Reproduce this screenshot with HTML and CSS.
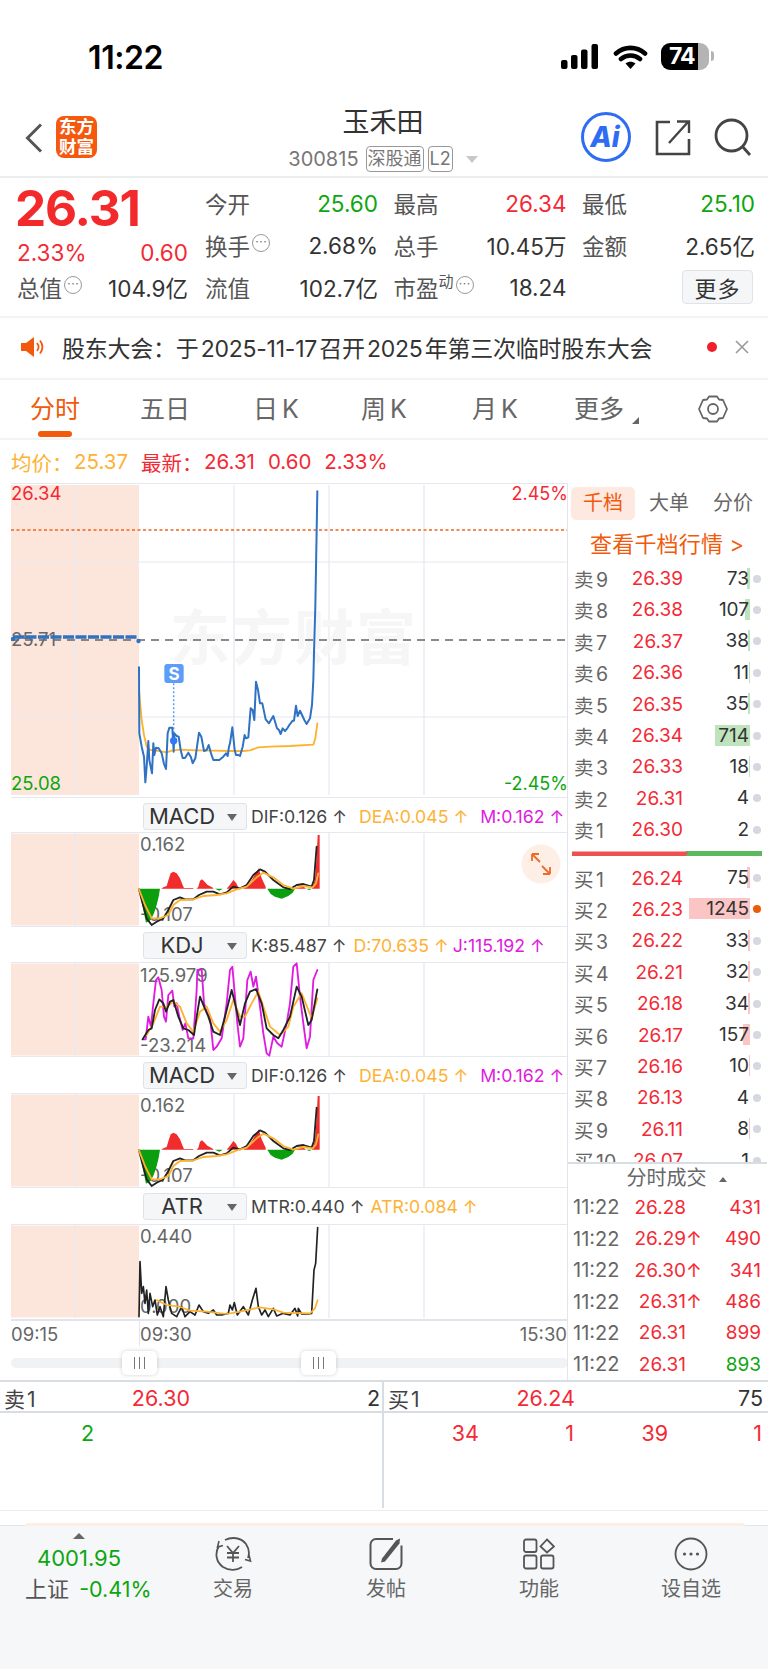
FILE: index.html
```html
<!DOCTYPE html>
<html lang="zh">
<head>
<meta charset="utf-8">
<title>玉禾田</title>
<link rel="stylesheet" href="styles.css">
</head>
<body>
<div class="page">
  <div class="status">
    <span class="clock">11:22</span>
    <div class="status-icons">
      <svg class="signal" width="38" height="25" viewBox="0 0 38 25"><rect x="0" y="16" width="6.5" height="9" rx="2"/><rect x="10" y="11" width="6.5" height="14" rx="2"/><rect x="20" y="5.5" width="6.5" height="19.5" rx="2"/><rect x="30.5" y="0" width="6.5" height="25" rx="2"/></svg>
      <svg class="wifi" width="35" height="25" viewBox="0 0 35 25"><path d="M3 9.5C11.5 2 23.5 2 32 9.5M8 15C13.5 10.300 21.500 10.300 27 15" fill="none" stroke="#000" stroke-width="4.6" stroke-linecap="round"/><path d="M12.500 19.500C15.500 17 19.500 17 22.500 19.500L17.500 25Z"/></svg>
      <div class="batt">74</div>
    </div>
  </div>

  <div class="nav">
    <svg class="back" width="18" height="30" viewBox="0 0 18 30"><path d="M16 1.500L2.500 15L16 28.500" fill="none" stroke="#555" stroke-width="3"/></svg>
    <div class="logo">东方<br>财富</div>
    <div class="nav-title">
      <div class="name">玉禾田</div>
      <div class="code"><span>300815</span><span class="tag">深股通</span><span class="tag">L2</span><i class="tri"></i></div>
    </div>
    <svg class="ai" width="52" height="52" viewBox="0 0 52 52"><circle cx="26" cy="26" r="23.500" fill="#fff" stroke="#2e6df2" stroke-width="3"/><text x="25" y="36" class="ai-text">Ai</text></svg>
    <svg class="share" width="36" height="37" viewBox="0 0 36 37"><path d="M15 3H2V35H34V20" fill="none" stroke="#444" stroke-width="2.600"/><path d="M14 24L33 3M22 2.500H34V14" fill="none" stroke="#444" stroke-width="2.400"/></svg>
    <svg class="search" width="38" height="38" viewBox="0 0 38 38"><circle cx="17.500" cy="17.500" r="15.500" fill="none" stroke="#444" stroke-width="2.800"/><path d="M28 28L36 37" stroke="#444" stroke-width="2.800"/></svg>
  </div>

  <div class="quote">
    <div class="q-left">
      <div class="big">26.31</div>
      <div class="q-chg"><span>2.33%</span><span>0.60</span></div>
      <div class="q-row"><span class="lab">总值<i class="more-dot">⋯</i></span><span class="val">104.9亿</span></div>
    </div>
    <div class="q-grid">
      <div class="q-row"><span class="lab">今开</span><span class="green">25.60</span></div>
      <div class="q-row"><span class="lab">最高</span><span class="red">26.34</span></div>
      <div class="q-row"><span class="lab">最低</span><span class="green">25.10</span></div>
      <div class="q-row"><span class="lab">换手<i class="more-dot">⋯</i></span><span class="val">2.68%</span></div>
      <div class="q-row"><span class="lab">总手</span><span class="val">10.45万</span></div>
      <div class="q-row"><span class="lab">金额</span><span class="val">2.65亿</span></div>
      <div class="q-row"><span class="lab">流值</span><span class="val">102.7亿</span></div>
      <div class="q-row"><span class="lab">市盈<sup>动</sup><i class="more-dot">⋯</i></span><span class="val">18.24</span></div>
      <div class="q-row q-end"><button class="morebtn">更多</button></div>
    </div>
  </div>

  <div class="notice">
    <svg width="24" height="24" viewBox="0 0 24 24"><path d="M1 8H6L14 2V22L6 16H1Z" fill="#f2590c"/><path d="M17 8C19 10.500 19 13.500 17 16M20 5.500C23 9.500 23 14.500 20 18.500" fill="none" stroke="#f2590c" stroke-width="1.800"/></svg>
    <span class="notice-text">股东大会：于 2025-11-17 召开 2025 年第三次临时股东大会</span>
    <i class="red-dot"></i>
    <svg class="close" width="16" height="16" viewBox="0 0 16 16"><path d="M2 2L14 14M14 2L2 14" stroke="#999" stroke-width="1.600"/></svg>
  </div>

  <div class="tabs">
    <span class="tab active">分时</span>
    <span class="tab t2">五日</span>
    <span class="tab t3">日 K</span>
    <span class="tab t4">周 K</span>
    <span class="tab t5">月 K</span>
    <span class="tab t6">更多<i class="corner"></i></span>
    <svg class="gear" width="30" height="30" viewBox="0 0 30 30"><path d="M11 2.500H19L21 5.500L25 6L29 15L25 24L21 24.500L19 27.500H11L9 24.500L5 24L1 15L5 6L9 5.500Z" fill="none" stroke="#666" stroke-width="1.800" stroke-linejoin="round"/><circle cx="15" cy="15" r="5" fill="none" stroke="#666" stroke-width="1.800"/></svg>
  </div>

  <div class="avgline">
    <span class="amber">均价：</span><span class="amber a2">25.37</span>
    <span class="red a3">最新：</span><span class="red a4">26.31</span><span class="red a5">0.60</span><span class="red a5">2.33%</span>
  </div>

  <div class="board">
    <div class="charts">
      <svg class="pane-main" width="568" height="316" viewBox="0 483 568 316">
        <rect x="11" y="485" width="128" height="310" fill="#fce6db"/>
        <g class="grid">
          <path d="M11 483.500H568M11 562H568M11 717H568M11 797.500H568M75 485V795M234 485V795M329 485V795M424 485V795"/>
        </g>
        <text x="170" y="660" class="wm">东方财富</text>
        <path d="M11 530H568" stroke="#f0651f" stroke-width="1.600" stroke-dasharray="3 2.500" fill="none"/>
        <path d="M11 640H568" stroke="#666" stroke-width="1.600" stroke-dasharray="8 6" fill="none"/>
        <text x="11" y="646" class="ax gray">25.71</text>
        <path d="M13 637H137" stroke="#2f72c4" stroke-width="3.500" stroke-dasharray="11 1.500" fill="none"/>
        <circle cx="13" cy="639" r="2.200" fill="#2f72c4"/><circle cx="138.500" cy="641" r="2.200" fill="#2f72c4"/>
        <text x="11" y="500" class="ax red-f">26.34</text>
        <text x="11" y="790" class="ax green-f">25.08</text>
        <text x="568" y="500" class="ax ax-pct red-f end">2.45%</text>
        <text x="568" y="790" class="ax ax-pct green-f end">-2.45%</text>
        <g transform="translate(130,640) scale(.33333)">
          <polyline class="l" stroke="#fdb22e" stroke-width="5.500" points="27,150 35,240 42,285 50,320 60,330 80,332 110,337 125,332 150,329 200,331 250,332 300,333 340,333 360,331 385,322 420,320 480,318 550,314 556,295 562,250"/>
          <path d="M131 130V320" stroke="#5b9df8" stroke-width="4.500" stroke-dasharray="6 6" fill="none"/>
          <polyline class="l" stroke="#2f72c4" stroke-width="6" points="27,82 28,280 35,320 42,350 46,427 50,380 55,303 58,360 66,400 70,310 73,345 78,323 86,325 95,340 102,372 108,387 113,280 118,263 127,263 131,335 133,280 140,288 146,290 152,330 158,354 165,354 175,338 183,352 188,370 196,355 207,278 214,290 222,333 230,330 236,315 243,340 250,360 268,360 278,352 288,340 293,348 297,320 300,310 307,262 314,330 318,345 325,345 330,348 338,320 344,285 348,295 355,292 362,205 368,210 373,240 378,125 384,150 390,190 397,190 407,238 417,250 430,228 441,265 447,270 452,282 458,265 465,273 472,265 478,255 488,242 492,242 498,197 503,228 510,212 516,225 523,240 530,252 540,235 546,195 550,120 553,0 556,-100 560,-330 562,-446"/>
          <circle cx="131" cy="302" r="11" fill="#2f7bf5"/>
          <rect x="103" y="72" width="58" height="57" rx="9" fill="#5b9df8"/>
        </g>
        <text x="174" y="680" class="s-badge">S</text>
      </svg>

      <div class="ind">
        <div class="sel">MACD<i class="sel-tri"></i></div>
        <span class="v">DIF:0.126 ↑</span><span class="v amber">DEA:0.045 ↑</span><span class="v mag">M:0.162 ↑</span>
      </div>
      <svg class="pane" width="568" height="95" viewBox="0 832 568 95">
        <g id="macdpane">
          <rect x="11" y="833.500" width="128" height="92" fill="#fce6db"/>
          <path class="grid-p" d="M11 832.500H568M11 926.500H568M75 833V926M234 833V926M329 833V926M424 833V926"/>
          <text x="140" y="851" class="ax gray">0.162</text>
          <text x="140" y="921" class="ax gray">-0.107</text>
          <g transform="translate(0,790) scale(.33333)">
            <path fill="#0b9e0f" d="M417 296H480L476 320L470 345L462 370L452 390L438 398L430 360L424 330ZM645 296H668L658 302ZM802 296H885L878 308L865 318L845 326L825 320L812 312ZM918 296H936L928 300Z"/>
            <path fill="#f22c2c" d="M484 296L490 292L500 288L506 268L512 250L520 245L530 250L540 265L548 285L552 294L580 294V296ZM590 296L595 290L600 272L606 268L614 275L622 284L640 294V296ZM680 296L690 284L700 270L708 278L714 290L718 296ZM730 296L745 285L757 268L768 248L776 235L785 265L797 290V296ZM885 296L905 285L918 296ZM936 296L945 270L950 200L953 135H959V296Z"/>
            <polyline class="l" stroke="#222" stroke-width="5.500" points="417,298 425,330 440,385 455,405 470,395 490,385 505,360 520,330 540,322 555,328 580,328 597,315 620,305 640,305 660,313 680,307 700,290 720,295 740,285 760,255 780,238 795,245 820,270 850,292 870,297 890,285 910,282 935,290 942,270 950,170"/>
            <polyline class="l" stroke="#fdb22e" stroke-width="5.500" points="417,298 435,345 455,385 480,385 505,375 520,345 540,330 580,328 610,318 650,315 680,310 710,298 740,290 770,262 790,248 820,262 850,285 880,296 910,288 938,292 948,280 955,250"/>
          </g>
        </g>
        <circle cx="541" cy="864" r="19.500" fill="#fdeee6"/>
        <path d="M532 854V861M532 854H539M532 854L540 862M550 874V867M550 874H543M550 874L542 866" stroke="#ef6a28" stroke-width="1.800" fill="none"/>
      </svg>

      <div class="ind i2">
        <div class="sel">KDJ<i class="sel-tri"></i></div>
        <span class="v">K:85.487 ↑</span><span class="v amber">D:70.635 ↑</span><span class="v mag tight">J:115.192 ↑</span>
      </div>
      <svg class="pane" width="568" height="95" viewBox="0 962 568 95">
        <rect x="11" y="963.500" width="128" height="92" fill="#fce6db"/>
        <path class="grid-p" d="M11 962.500H568M11 1056.500H568M75 963V1056M234 963V1056M329 963V1056M424 963V1056"/>
        <text x="140" y="982" class="ax gray">125.979</text>
        <text x="140" y="1052" class="ax gray">-23.214</text>
        <g transform="translate(0,790) scale(.33333)">
          <polyline class="l" stroke="#e01ae0" stroke-width="5.500" points="428,748 437,748 445,680 453,710 460,640 468,570 475,562 485,600 492,680 498,695 505,615 517,602 523,650 530,640 538,680 548,720 556,700 565,745 580,745 590,600 592,540 605,538 612,640 622,670 630,680 640,780 650,770 665,745 680,640 690,540 697,530 705,620 712,700 720,770 730,745 742,570 752,545 760,590 768,560 780,650 790,730 800,790 808,797 820,740 832,760 845,770 860,700 870,640 880,530 890,520 900,620 910,700 920,775 930,740 940,570 952,540"/>
          <polyline class="l" stroke="#fdb22e" stroke-width="5.500" points="440,735 460,700 480,650 500,650 520,635 540,650 560,700 580,725 600,665 620,650 640,700 660,725 680,690 700,630 720,680 735,680 755,640 775,605 790,650 810,710 840,735 865,710 880,650 905,610 925,660 935,685 952,625"/>
          <polyline class="l" stroke="#222" stroke-width="5.500" points="428,748 445,720 455,715 465,660 478,628 490,640 498,665 510,635 520,630 535,680 550,715 565,720 582,735 590,680 600,620 612,650 625,680 640,725 660,735 675,680 695,600 705,640 720,705 735,640 750,605 768,597 785,640 800,715 820,735 835,745 850,720 870,680 890,590 905,620 925,705 935,690 952,598"/>
        </g>
      </svg>

      <div class="ind i3">
        <div class="sel">MACD<i class="sel-tri"></i></div>
        <span class="v">DIF:0.126 ↑</span><span class="v amber">DEA:0.045 ↑</span><span class="v mag">M:0.162 ↑</span>
      </div>
      <svg class="pane" width="568" height="95" viewBox="0 832 568 95"><use href="#macdpane"/></svg>

      <div class="ind i3 i4">
        <div class="sel">ATR<i class="sel-tri"></i></div>
        <span class="v">MTR:0.440 ↑</span><span class="v amber">ATR:0.084 ↑</span>
      </div>
      <svg class="pane atr" width="568" height="97" viewBox="0 1224 568 97">
        <rect x="11" y="1225.500" width="128" height="92" fill="#fce6db"/>
        <path class="grid-p" d="M11 1224.500H568M75 1225V1318M234 1225V1318M329 1225V1318M424 1225V1318"/>
        <path d="M11 1320H568" stroke="#d8dbe2" stroke-width="1.500"/>
        <text x="140" y="1243" class="ax gray">0.440</text>
        <text x="140" y="1313" class="ax gray">0.000</text>
        <g transform="translate(0,1060) scale(.33333)">
          <polyline class="l" stroke="#222" stroke-width="5" points="417,770 420,605 425,700 430,680 435,730 440,690 445,760 450,700 458,740 465,720 472,765 480,740 490,770 498,680 505,720 515,760 530,770 545,740 555,770 570,755 585,765 597,735 610,755 625,760 640,750 650,765 665,765 685,760 690,735 697,750 703,728 712,765 730,740 745,765 757,720 768,685 775,740 785,765 795,750 805,770 820,745 830,768 850,760 870,765 885,745 893,768 895,745 905,762 925,762 935,760 942,630 947,610 953,503"/>
          <polyline class="l" stroke="#fdb22e" stroke-width="5" points="470,720 500,735 540,740 570,752 620,755 680,762 720,755 780,742 820,748 850,758 930,760 945,745 953,720"/>
        </g>
      </svg>

      <div class="axis"><span>09:15</span><span class="a930">09:30</span><span class="a1530">15:30</span></div>
      <div class="slider">
        <div class="track">
          <div class="knob k1"><i></i><i></i><i></i></div>
          <div class="knob k2"><i></i><i></i><i></i></div>
        </div>
      </div>
    </div>

    <div class="side">
      <div class="side-tabs"><span class="st on">千档</span><span class="st">大单</span><span class="st">分价</span></div>
      <div class="side-link">查看千档行情 &gt;</div>
      <div class="book">
        <div class="row"><span class="rl">卖 9</span><span class="rp">26.39</span><span class="rv"><b class="bar g" style="width:3px"></b><em>73</em></span><i class="dot"></i></div>
        <div class="row"><span class="rl">卖 8</span><span class="rp">26.38</span><span class="rv"><b class="bar g" style="width:5px"></b><em>107</em></span><i class="dot"></i></div>
        <div class="row"><span class="rl">卖 7</span><span class="rp">26.37</span><span class="rv"><b class="bar g" style="width:2px"></b><em>38</em></span><i class="dot"></i></div>
        <div class="row"><span class="rl">卖 6</span><span class="rp">26.36</span><span class="rv"><b class="bar g" style="width:1px"></b><em>11</em></span><i class="dot"></i></div>
        <div class="row"><span class="rl">卖 5</span><span class="rp">26.35</span><span class="rv"><b class="bar g" style="width:2px"></b><em>35</em></span><i class="dot"></i></div>
        <div class="row"><span class="rl">卖 4</span><span class="rp">26.34</span><span class="rv"><b class="bar g" style="width:35px"></b><em>714</em></span><i class="dot"></i></div>
        <div class="row"><span class="rl">卖 3</span><span class="rp">26.33</span><span class="rv"><b class="bar g" style="width:1px"></b><em>18</em></span><i class="dot"></i></div>
        <div class="row"><span class="rl">卖 2</span><span class="rp">26.31</span><span class="rv"><em>4</em></span><i class="dot"></i></div>
        <div class="row"><span class="rl">卖 1</span><span class="rp">26.30</span><span class="rv"><em>2</em></span><i class="dot"></i></div>
        <div class="ratio"><i class="ratio-r"></i><i class="ratio-g"></i></div>
        <div class="row first"><span class="rl">买 1</span><span class="rp">26.24</span><span class="rv"><b class="bar r" style="width:3px"></b><em>75</em></span><i class="dot"></i></div>
        <div class="row"><span class="rl">买 2</span><span class="rp">26.23</span><span class="rv"><b class="bar r" style="width:61px"></b><em>1245</em></span><i class="dot hot"></i></div>
        <div class="row"><span class="rl">买 3</span><span class="rp">26.22</span><span class="rv"><b class="bar r" style="width:2px"></b><em>33</em></span><i class="dot"></i></div>
        <div class="row"><span class="rl">买 4</span><span class="rp">26.21</span><span class="rv"><b class="bar r" style="width:2px"></b><em>32</em></span><i class="dot"></i></div>
        <div class="row"><span class="rl">买 5</span><span class="rp">26.18</span><span class="rv"><b class="bar r" style="width:2px"></b><em>34</em></span><i class="dot"></i></div>
        <div class="row"><span class="rl">买 6</span><span class="rp">26.17</span><span class="rv"><b class="bar r" style="width:7px"></b><em>157</em></span><i class="dot"></i></div>
        <div class="row"><span class="rl">买 7</span><span class="rp">26.16</span><span class="rv"><b class="bar r" style="width:1px"></b><em>10</em></span><i class="dot"></i></div>
        <div class="row"><span class="rl">买 8</span><span class="rp">26.13</span><span class="rv"><em>4</em></span><i class="dot"></i></div>
        <div class="row"><span class="rl">买 9</span><span class="rp">26.11</span><span class="rv"><b class="bar r" style="width:1px"></b><em>8</em></span><i class="dot"></i></div>
        <div class="row"><span class="rl">买 10</span><span class="rp">26.07</span><span class="rv"><em>1</em></span><i class="dot"></i></div>
      </div>
      <div class="trades">
        <div class="tr-head">分时成交<i class="up-tri"></i></div>
        <div class="tr"><span class="tt">11:22</span><span class="tp">26.28</span><span class="ta"></span><span class="tv red">431</span></div>
        <div class="tr"><span class="tt">11:22</span><span class="tp">26.29</span><span class="ta">↑</span><span class="tv red">490</span></div>
        <div class="tr"><span class="tt">11:22</span><span class="tp">26.30</span><span class="ta">↑</span><span class="tv red">341</span></div>
        <div class="tr"><span class="tt">11:22</span><span class="tp">26.31</span><span class="ta">↑</span><span class="tv red">486</span></div>
        <div class="tr"><span class="tt">11:22</span><span class="tp">26.31</span><span class="ta"></span><span class="tv red">899</span></div>
        <div class="tr"><span class="tt">11:22</span><span class="tp">26.31</span><span class="ta"></span><span class="tv green">893</span></div>
      </div>
    </div>
  </div>

  <div class="depth">
    <div class="dh dl">
      <div class="d1"><span class="lab2">卖 1</span><span class="red ra">26.30</span><span class="val ra">2</span></div>
      <div class="d2"><span class="green ra">2</span></div>
    </div>
    <div class="dh dr">
      <div class="d1"><span class="lab2">买 1</span><span class="red ra">26.24</span><span class="val ra">75</span></div>
      <div class="d2"><span class="red ra">34</span><span class="red ra">1</span><span class="red ra">39</span><span class="red ra">1</span></div>
    </div>
  </div>

  <div class="tabbar">
    <div class="idx">
      <i class="idx-tri"></i>
      <div class="green idx-v">4001.95</div>
      <div class="idx-n"><span class="lab">上证</span> <span class="green idx-pct">-0.41%</span></div>
    </div>
    <div class="tb">
      <svg width="38" height="34" viewBox="0 0 38 34"><path d="M11 3C18 -0.500 27 0.500 32 7C35 11.500 35.500 17 34 21M5 9C0.500 16 2 25 9 30C15 34 23 33.500 28 30" fill="none" stroke="#555" stroke-width="1.800"/><path d="M5 4L3.500 10L9 8.500M35 18L36.500 24L31 22.500" fill="none" stroke="#555" stroke-width="1.600"/><path d="M13 9L19 16L25 9M19 16V25M13 16H25M13 20.500H25" fill="none" stroke="#555" stroke-width="1.800"/></svg>
      <span>交易</span>
    </div>
    <div class="tb">
      <svg width="34" height="33" viewBox="0 0 34 33"><path d="M24 1.500H7C4 1.500 1.500 4 1.500 7V26C1.500 29 4 31.500 7 31.500H27C30 31.500 32.500 29 32.500 26V8" fill="none" stroke="#555" stroke-width="2"/><path d="M13 21L27 3L31 1L30.500 6L16 24L12 25Z" fill="#555"/></svg>
      <span>发帖</span>
    </div>
    <div class="tb">
      <svg width="32" height="31" viewBox="0 0 32 31"><g fill="none" stroke="#555" stroke-width="1.800"><rect x="1" y="1" width="12.500" height="12.500" rx="2"/><rect x="1" y="17" width="12.500" height="13" rx="2"/><rect x="18" y="17" width="12.500" height="13" rx="2"/><path d="M24 1L31 8L24 14L17.500 8Z"/></g></svg>
      <span>功能</span>
    </div>
    <div class="tb">
      <svg width="34" height="33" viewBox="0 0 34 33"><circle cx="17" cy="16.500" r="15.500" fill="none" stroke="#555" stroke-width="1.800"/><circle cx="10.500" cy="16.500" r="1.600" fill="#555"/><circle cx="17" cy="16.500" r="1.600" fill="#555"/><circle cx="23.500" cy="16.500" r="1.600" fill="#555"/></svg>
      <span>设自选</span>
    </div>
  </div>
</div>
</body>
</html>
```

FILE: styles.css
```css
* { box-sizing: border-box; }
html, body { margin: 0; padding: 0; background: #fff; }
body { font-family: Inter, "Noto Sans CJK SC", sans-serif; color: #333; }
i, em, b { font-style: normal; font-weight: 400; }
.page { width: 768px; height: 1669px; overflow: hidden; position: relative; }
.red { color: #f32a35; }
.green { color: #0da60f; }
.amber { color: #fdb235; }
.mag { color: #e01ae0; }
.lab { color: #555; }
.val { color: #333; }

.status { height: 104px; display: flex; justify-content: space-between; padding: 43px 59px 0 88px; }
.clock { font-size: 32px; font-weight: 600; line-height: 30px; color: #000; letter-spacing: -.4px; }
.status-icons { display: flex; gap: 14px; align-items: flex-start; }
.signal { margin-top: 1px; }
.wifi { margin-top: 1px; margin-right: -1px; }
.batt { position: relative; width: 48px; height: 27px; border-radius: 9px; background: linear-gradient(90deg, #000 77%, #b4b4b4 77%); color: #fff; font-size: 23px; font-weight: 700; line-height: 27px; padding-left: 8px; letter-spacing: -1px; }
.batt::after { content: ""; position: absolute; right: -5px; top: 8px; width: 3px; height: 10px; border-radius: 0 3px 3px 0; background: #b4b4b4; }

.nav { height: 74px; border-bottom: 2px solid #eceded; position: relative; }
.back { position: absolute; left: 25px; top: 19px; }
.logo { position: absolute; left: 56px; top: 12px; width: 41px; height: 42px; border-radius: 8px; background: #f5580f; color: #fff; font-size: 17.500px; font-weight: 700; line-height: 20px; text-align: center; padding-top: 1px; }
.nav-title { position: absolute; left: 268px; width: 230px; top: 0; display: flex; flex-direction: column; align-items: center; }
.name { font-size: 27px; line-height: 38px; color: #333; }
.code { display: flex; align-items: center; gap: 4px; font-size: 20px; color: #777; line-height: 26px; margin-top: 4px; }
.code span:first-child { margin-right: 3px; }
.tag { border: 1px solid #999; border-radius: 4px; font-size: 18px; line-height: 24px; padding: 0 1px; color: #777; }
.tri { border: 6px solid transparent; border-top: 7px solid #c8c8c8; border-bottom: 0; margin-left: 9px; }
.ai { position: absolute; left: 580px; top: 7px; }
.ai-text { font-size: 28px; font-weight: 800; font-style: italic; fill: #2e6df2; text-anchor: middle; }
.share { position: absolute; left: 655px; top: 15px; }
.search { position: absolute; left: 714px; top: 14px; }

.quote { height: 140px; border-bottom: 2px solid #f3f3f3; padding: 0 15px 0 17px; display: flex; gap: 17px; font-size: 22.500px; }
.q-left { width: 171px; flex: none; display: flex; flex-direction: column; }
.big { font-size: 49.500px; font-weight: 700; color: #f32a2c; line-height: 50px; margin-top: 5px; margin-left: -2px; letter-spacing: -1.200px; }
.q-chg { display: flex; justify-content: space-between; color: #f32a35; line-height: 28px; margin-top: 6px; }
.q-left .q-row { margin-top: 5px; height: 30px; }
.q-grid { flex: 1; display: grid; grid-template-columns: repeat(3, 173px); grid-auto-rows: 42px; column-gap: 15.500px; padding-top: 4px; }
.q-row { display: flex; justify-content: space-between; align-items: center; height: 42px; }
.lab { white-space: nowrap; }
.more-dot { display: inline-block; width: 18px; height: 18px; border: 1px solid #999; border-radius: 50%; font-size: 12px; line-height: 16px; text-align: center; color: #777; vertical-align: 8px; margin-left: 2px; }
sup { font-size: 15px; line-height: 0; vertical-align: 10px; color: #555; }
.q-end { justify-content: flex-end; }
.morebtn { width: 71px; height: 34px; background: #f5f6f8; border: 1px solid #e0e3e8; border-radius: 4px; font-family: inherit; font-size: 22px; color: #333; padding: 0; margin-right: 2px; letter-spacing: 1px; }

.notice { height: 62px; border-bottom: 2px solid #f3f3f3; display: flex; align-items: center; padding: 0 18px 3px 20px; font-size: 23px; color: #333; }
.notice-text { margin-left: 18px; width: 635px; white-space: nowrap; letter-spacing: -.25px; word-spacing: -4px; }
.red-dot { width: 10px; height: 10px; border-radius: 50%; background: #f01f2c; margin-left: 10px; }
.close { margin-left: 17px; }

.tabs { height: 60px; border-bottom: 2px solid #f3f3f3; position: relative; font-size: 25px; color: #666; word-spacing: -3px; }
.tab { position: absolute; top: 11px; line-height: 36px; white-space: nowrap; }
.tab.active { left: 30px; color: #ef5b0c; }
.tab.active::after { content: ""; position: absolute; left: 8px; width: 34px; height: 6px; bottom: -10px; border-radius: 3px; background: #f05a0a; }
.t2 { left: 140px; } .t3 { left: 253px; } .t4 { left: 361px; } .t5 { left: 472px; } .t6 { left: 574px; }
.corner { position: absolute; right: -15px; bottom: 3px; border-left: 7px solid transparent; border-bottom: 7px solid #666; }
.gear { position: absolute; left: 698px; top: 14px; }

.avgline { height: 43px; padding: 0 0 0 11px; display: flex; align-items: center; font-size: 20.500px; white-space: nowrap; }
.a2 { margin-left: 1.500px; width: 55px; }
.a3 { margin-left: 12px; }
.a4 { margin-left: 1.500px; }
.a5 { margin-left: 13px; }

.board { display: flex; height: 897px; }
.charts { width: 568px; flex: none; }
svg { display: block; }
.grid path, .grid-p { stroke: #e6e8f0; stroke-width: 1.200; fill: none; }
.l { fill: none; stroke-linejoin: round; stroke-linecap: round; }
.wm { font-size: 60px; font-weight: 700; fill: #f6f6f6; letter-spacing: 2px; }
.ax { font-size: 18.500px; }
.ax-pct { font-size: 18px; }
.gray { fill: #666; }
.red-f { fill: #f32a35; }
.green-f { fill: #0da60f; }
.end { text-anchor: end; }
.s-badge { font-size: 17px; font-weight: 700; fill: #fff; text-anchor: middle; }

.ind { height: 33px; display: flex; align-items: center; padding: 1px 0 0 143px; font-size: 17.700px; color: #444; white-space: nowrap; }
.ind .v { margin-right: 12px; }
.i2 { height: 35px; }
.i2 .v { margin-right: 7px; }
.i3 { height: 36px; }
.i4 .v { margin-right: 6px; }
.sel { width: 104px; height: 27px; flex: none; position: relative; background: #f5f6f8; border: 1px solid #dfe2e8; border-radius: 3px; font-size: 22px; line-height: 25px; color: #333; text-align: center; padding-right: 26px; margin-right: 4px; }
.sel-tri { position: absolute; right: 9px; top: 10px; border: 5px solid transparent; border-top: 7px solid #666; border-bottom: 0; }
.tight { margin-left: -3px; }

.axis { height: 25px; position: relative; font-size: 18.500px; color: #666; padding-left: 11px; line-height: 27px; }
.a930 { position: absolute; left: 140px; }
.a930::before { content: ""; position: absolute; left: -1px; top: -2px; height: 27px; width: 1px; background: #e3e5ea; }
.a1530 { position: absolute; right: 1px; }
.slider { height: 34px; padding: 12px 0 0 11px; }
.track { height: 10px; background: #f1f2f4; border-radius: 5px; position: relative; }
.knob { position: absolute; top: -7px; width: 35px; height: 24px; background: #fff; border-radius: 5px; box-shadow: 0 0 4px rgba(0,0,0,.18); display: flex; justify-content: center; align-items: center; gap: 3.500px; }
.knob i { width: 1.500px; height: 12px; background: #777; }
.k1 { left: 111px; }
.k2 { left: 290px; }

.side { width: 200px; border-left: 1px solid #e3e5ea; margin-left: -1px; display: flex; flex-direction: column; position: relative; z-index: 1; }
.side-tabs { height: 40px; display: flex; padding: 4px 0 0 3px; font-size: 20px; color: #666; }
.st { width: 64px; height: 33px; line-height: 33px; text-align: center; border-radius: 5px; }
.st.on { color: #f15a0c; background: #fde9df; margin-right: 2px; }
.side-link { height: 40px; font-size: 22px; color: #f15a0c; line-height: 42px; padding-left: 22px; letter-spacing: .2px; }
.book { height: 601px; overflow: hidden; }
.row { height: 31.400px; display: grid; grid-template-columns: 44px 65px 66px 1fr; padding-left: 6px; align-items: center; font-size: 19px; }
.row.first { margin-top: 6px; }
.rl { color: #666; white-space: nowrap; font-size: 19.500px; word-spacing: -3px; }
.rp { color: #f32a35; text-align: right; }
.rv { position: relative; text-align: right; color: #333; height: 22px; line-height: 22px; margin-left: -4px; }
.rv em { position: relative; }
.bar { position: absolute; right: -1px; top: 0; height: 21px; }
.bar.g { background: #bfe3bd; }
.bar.r { background: #fcc5c5; }
.dot { width: 8px; height: 8px; border-radius: 50%; background: #d5d8e0; margin-left: 4px; }
.dot.hot { background: #ec5c07; }
.ratio { height: 5px; margin: 6px 5px 0 4px; display: flex; }
.ratio-r { width: 116px; background: #ee4f4f; clip-path: polygon(0 0, 100% 0, 98% 100%, 0 100%); }
.ratio-g { flex: 1; background: #5cb85c; margin-left: -2px; }
.trades { border-top: 2px solid #d8dce3; flex: 1; }
.tr-head { height: 28px; text-align: center; font-size: 20px; line-height: 28px; color: #666; padding-left: 18px; position: relative; }
.up-tri { position: relative; display: inline-block; margin-left: 12px; top: -3px; border: 4px solid transparent; border-bottom: 5px solid #666; border-top: 0; }
.tr { height: 31.400px; display: grid; grid-template-columns: 46px 67px 13px 62px; padding-left: 5px; align-items: center; font-size: 19px; }
.tt { color: #666; font-size: 20px; }
.tp { color: #f32a35; text-align: right; }
.ta { color: #f32a35; white-space: nowrap; }
.tv { text-align: right; }

.depth { height: 131px; border-top: 2px solid #d8dce3; border-bottom: 1px solid #ececec; display: flex; font-size: 21.500px; position: relative; }
.dh { height: 126px; }
.dl { width: 384px; border-right: 2px solid #d8dce3; }
.dr { flex: 1; }
.d1 { height: 31px; display: grid; align-items: center; padding-left: 4px; grid-template-columns: 32px 154px 190px; }
.dr .d1 { grid-template-columns: 32px 155px 188px; }
.lab2 { color: #444; white-space: nowrap; font-size: 21px; word-spacing: -4px; }
.ra { text-align: right; }
.depth::after { content: ""; position: absolute; left: 0; right: 0; top: 29px; height: 2px; background: #d8dce3; }
.d2 { height: 40px; display: grid; align-items: center; grid-template-columns: 94px; }
.dr .d2 { grid-template-columns: 95px 95px 94px 94px; }

.tabbar { position: absolute; left: 0; right: 0; top: 1525px; height: 144px; background: #f6f7f9; border-top: 1px solid #e3e4e6; display: flex; }
.tabbar::before { content: ""; position: absolute; left: 25px; right: 23px; top: -3px; height: 3px; border-radius: 3px 3px 0 0; background: #fdeee3; }
.idx { width: 153px; flex: none; padding-top: 7px; font-size: 22px; display: flex; flex-direction: column; align-items: flex-start; padding-left: 25px; }
.idx-tri { margin-left: 48px; border: 6px solid transparent; border-bottom: 6px solid #666; border-top: 0; }
.idx-v { margin-left: 12px; line-height: 28px; margin-top: 5px; }
.idx-n { line-height: 34px; white-space: nowrap; }
.idx-pct { margin-left: 4px; font-size: 21.500px; }
.tb { position: absolute; top: 11px; width: 100px; display: flex; flex-direction: column; align-items: center; font-size: 20px; color: #666; }
.tb svg { height: 34px; }
.tb span { line-height: 30px; margin-top: 3px; }
.tb:nth-child(2) { left: 183px; }
.tb:nth-child(3) { left: 336px; }
.tb:nth-child(4) { left: 489px; }
.tb:nth-child(5) { left: 641px; }
```
